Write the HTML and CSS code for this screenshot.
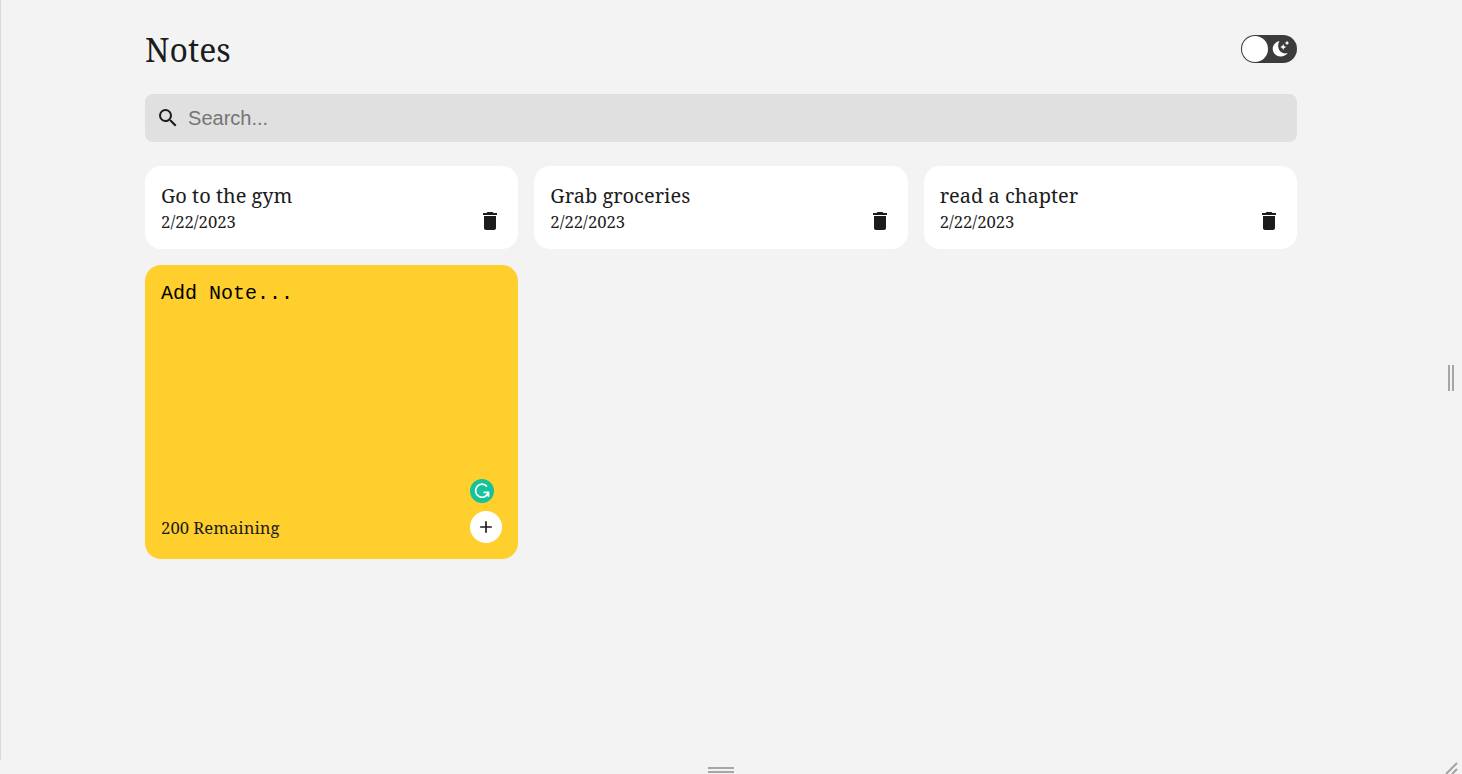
FILE: index.html
```
<!DOCTYPE html>
<html lang="en">
<head>
<meta charset="utf-8">
<title>Notes</title>
<link rel="stylesheet" href="styles.css">
</head>
<body>
<div class="device">
  <main class="app">
    <header class="header">
      <h1 class="title">Notes</h1>
      <label class="toggle">
        <input class="toggle-input" type="checkbox" aria-label="Dark mode">
        <svg class="moon" viewBox="0 0 18 18" aria-hidden="true"><path fill="#fff" d="M7.500 1C2.500 2-.5 7 1.200 11.500c2.200 5.800 10.800 6.800 14.600 1.500C9 15.500 3.500 8 7.500 1Z"/><path fill="#fff" d="m11.200 4 .9 2.100 2.100.9-2.100.9-.9 2.100-.9-2.100-2.100-.9 2.100-.9ZM15 .7l.8 1.500 1.500.8-1.500.8-.8 1.500-.8-1.500-1.500-.8 1.500-.8Z"/></svg>
      </label>
    </header>
    <label class="search">
      <svg class="search-icon" viewBox="0 0 24 24" aria-hidden="true"><path d="M15.500 14h-.79l-.28-.27A6.471 6.471 0 0 0 16 9.500 6.500 6.500 0 1 0 9.500 16c1.610 0 3.090-.59 4.230-1.570l.27.28v.79l5 4.990L20.490 19l-4.990-5zm-6 0C7.010 14 5 11.990 5 9.500S7.010 5 9.500 5 14 7.010 14 9.500 11.990 14 9.500 14z"/></svg>
      <input class="search-input" type="text" placeholder="Search..." aria-label="Search notes">
    </label>
    <section class="notes">
      <article class="note">
        <p class="note-text">Go to the gym</p>
        <div class="note-footer"><small class="note-date">2/22/2023</small><button class="delete" type="button" aria-label="Delete note"><svg viewBox="0 0 24 24" aria-hidden="true"><path d="M6 19c0 1.100.9 2 2 2h8c1.100 0 2-.9 2-2V7H6v12zM19 4h-3.500l-1-1h-5l-1 1H5v2h14V4z"/></svg></button></div>
      </article>
      <article class="note">
        <p class="note-text">Grab groceries</p>
        <div class="note-footer"><small class="note-date">2/22/2023</small><button class="delete" type="button" aria-label="Delete note"><svg viewBox="0 0 24 24" aria-hidden="true"><path d="M6 19c0 1.100.9 2 2 2h8c1.100 0 2-.9 2-2V7H6v12zM19 4h-3.500l-1-1h-5l-1 1H5v2h14V4z"/></svg></button></div>
      </article>
      <article class="note">
        <p class="note-text">read a chapter</p>
        <div class="note-footer"><small class="note-date">2/22/2023</small><button class="delete" type="button" aria-label="Delete note"><svg viewBox="0 0 24 24" aria-hidden="true"><path d="M6 19c0 1.100.9 2 2 2h8c1.100 0 2-.9 2-2V7H6v12zM19 4h-3.500l-1-1h-5l-1 1H5v2h14V4z"/></svg></button></div>
      </article>
      <form class="note note-new">
        <div class="editor">
          <textarea class="editor-input" rows="8" placeholder="Add Note..." aria-label="New note"></textarea>
          <svg class="grammar" viewBox="0 0 24 24" aria-hidden="true"><circle cx="12" cy="12" r="12" fill="#15c39a"/><path d="M17 7.500A6.500 6.500 0 1 0 18.300 13.500M13.500 13.400H18.500V17.800" fill="none" stroke="#fff" stroke-width="1.700"/></svg>
        </div>
        <div class="note-footer"><small class="note-date">200 Remaining</small><button class="add" type="button" aria-label="Save note"><svg viewBox="0 0 24 24" aria-hidden="true"><path d="M19 13h-6v6h-2v-6H5v-2h6V5h2v6h6v2z"/></svg></button></div>
      </form>
    </section>
  </main>
  <div class="handle-right"><span class="grip grip-vertical"></span></div>
  <div class="handle-bottom"><span class="grip grip-horizontal"></span></div>
  <div class="handle-corner"><svg class="corner-icon" viewBox="0 0 14 12" aria-hidden="true"><path d="M1 12 12 1M7 12l5-5" fill="none" stroke="#a3a3a3" stroke-width="2"/></svg></div>
</div>
</body>
</html>
```
FILE: styles.css
```
* { box-sizing: border-box; }

body {
  margin: 0;
  background: #f3f3f3;
  color: #1c1c1c;
  font-family: "Noto Serif", "Droid Serif", "Liberation Serif", serif;
}

.device {
  display: grid;
  grid-template-columns: 1fr 21px;
  grid-template-rows: 1fr 14px;
  min-height: 100vh;
}

.app {
  padding: 24px 10% 0;
  border-left: 1px solid #d9d9d9;
}

.header {
  display: flex;
  align-items: center;
  justify-content: space-between;
  height: 50px;
  margin-bottom: 20px;
}

.title {
  margin: 0;
  padding-top: 2px;
  font-size: 32px;
  font-weight: 400;
  line-height: 44px;
}

.toggle {
  display: flex;
  align-items: center;
  position: relative;
}

.toggle-input {
  appearance: none;
  width: 56px;
  height: 28px;
  margin: 0;
  padding: 1px;
  border-radius: 14px;
  background: #3b3b3b;
}

.toggle-input::before {
  content: "";
  display: block;
  width: 26px;
  height: 26px;
  border-radius: 50%;
  background: #fff;
}

.toggle-input:checked::before { margin-left: auto; }

.moon {
  position: absolute;
  right: 7px;
  width: 18px;
  height: 18px;
  pointer-events: none;
}

.search {
  display: flex;
  align-items: center;
  gap: 8px;
  height: 48px;
  margin-bottom: 24px;
  padding: 0 11px;
  border-radius: 8px;
  background: #e0e0e0;
}

.search-icon {
  width: 24px;
  height: 24px;
  fill: #1c1c1c;
}

.search-input {
  flex: 1;
  min-width: 0;
  padding: 0;
  border: 0;
  outline: 0;
  background: none;
  font: 20px "Liberation Sans", Arial, sans-serif;
}

.search-input::placeholder { color: #757575; }

.notes {
  display: grid;
  grid-template-columns: repeat(3, 1fr);
  gap: 16px;
  font-size: 20px;
}

.note {
  padding: 16px;
  border-radius: 16px;
  background: #fff;
}

.note-text {
  margin: 0;
  line-height: 27px;
}

.note-footer {
  display: flex;
  align-items: center;
  justify-content: space-between;
}

.note-date {
  padding-top: 2px;
  font-size: smaller;
  line-height: 22px;
}

.delete {
  width: 24px;
  height: 24px;
  padding: 0;
  border: 0;
  background: none;
}

.delete svg,
.add svg {
  display: block;
  fill: #1c1c1c;
}

.note-new { background: #ffcf2d; }

.editor {
  position: relative;
}

.editor-input {
  display: block;
  width: 100%;
  height: 230px;
  padding: 0;
  border: 0;
  outline: 0;
  resize: none;
  background: none;
  font: 20px/26px "Liberation Mono", "Courier New", monospace;
}

.editor-input::placeholder { color: #000; }

.grammar {
  position: absolute;
  right: 8px;
  bottom: 8px;
  width: 24px;
  height: 24px;
}

.add {
  display: flex;
  align-items: center;
  justify-content: center;
  width: 32px;
  height: 32px;
  padding: 0;
  border: 0;
  border-radius: 50%;
  background: #fff;
}

.add svg {
  width: 20px;
  height: 20px;
}

.handle-right,
.handle-bottom {
  display: flex;
  align-items: center;
  justify-content: center;
}

.handle-right { padding: 0 2px 4px 0; }

.handle-bottom {
  align-items: flex-end;
  padding-bottom: 1px;
}

.grip { display: block; border: 0 solid #a6a6a6; }

.grip-vertical {
  width: 6px;
  height: 26px;
  border-width: 0 2px;
}

.grip-horizontal {
  width: 26px;
  height: 6px;
  border-width: 2px 0;
}

.handle-corner {
  display: flex;
  align-items: flex-end;
  justify-content: center;
}

.corner-icon { width: 14px; height: 12px; }
```
